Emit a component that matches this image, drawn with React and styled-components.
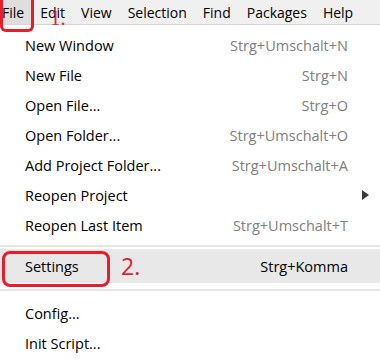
import React from "react";
import styled, { createGlobalStyle } from "styled-components";

const GlobalStyle = createGlobalStyle`
  body {
    margin: 0;
    background: #ffffff;
    font-family: "Open Sans", "Noto Sans", "Liberation Sans", sans-serif;
  }
`;

const menus = ["File", "Edit", "View", "Selection", "Find", "Packages", "Help"];

const groups = [
  [
    { label: "New Window", keys: "Strg+Umschalt+N" },
    { label: "New File", keys: "Strg+N" },
    { label: "Open File...", keys: "Strg+O" },
    { label: "Open Folder...", keys: "Strg+Umschalt+O" },
    { label: "Add Project Folder...", keys: "Strg+Umschalt+A" },
    { label: "Reopen Project", submenu: true },
    { label: "Reopen Last Item", keys: "Strg+Umschalt+T" },
  ],
  [{ label: "Settings", keys: "Strg+Komma", active: true, mark: "2." }],
  [{ label: "Config..." }, { label: "Init Script..." }],
];

const App = () => {
  return (
    <>
      <GlobalStyle />
      <Page>
        <MenuBar>
          {menus.map((m, i) => (
            <MenuTitle key={m} $open={i === 0}>
              {m}
            </MenuTitle>
          ))}
          <FileCircle />
          <StepOne>1.</StepOne>
        </MenuBar>
        <Dropdown>
          {groups.map((group, gi) => (
            <React.Fragment key={gi}>
              {gi > 0 && <Separator $before={gi === 1 ? 5 : 6} $after={gi === 1 ? 2 : 7} />}
              {group.map((item) => (
                <Row key={item.label} $active={item.active}>
                  <Label>{item.label}</Label>
                  {item.mark && (
                    <>
                      <SettingsCircle />
                      <StepTwo>{item.mark}</StepTwo>
                    </>
                  )}
                  {item.keys && <Keys $active={item.active}>{item.keys}</Keys>}
                  {item.submenu && (
                    <Arrow viewBox="0 0 7 10">
                      <path d="M0 0 L7 5 L0 10 Z" fill="#3c3c3c" />
                    </Arrow>
                  )}
                </Row>
              ))}
            </React.Fragment>
          ))}
        </Dropdown>
      </Page>
    </>
  );
};

const Page = styled.div`
  width: 380px;
  height: 360px;
  overflow: hidden;
  background: #ffffff;
`;

const MenuBar = styled.div`
  position: relative;
  display: flex;
  height: 24px;
  background: #f0f0f0;
  border-bottom: 1px solid #d4d4d4;
`;

const MenuTitle = styled.div`
  display: flex;
  align-items: center;
  padding: 0 8px;
  padding-left: ${(p) => (p.$open ? "2px" : "8px")};
  font-size: 14px;
  color: #000000;
  background: ${(p) => (p.$open ? "#dedede" : "transparent")};
`;

const FileCircle = styled.div`
  position: absolute;
  left: 0;
  top: 0;
  width: 28px;
  height: 29px;
  border: 3px solid #e61e2a;
  border-top: none;
  border-radius: 0 0 6px 6px;
`;

const StepOne = styled.span`
  position: absolute;
  left: 50px;
  top: 8px;
  font-family: "Liberation Serif", serif;
  font-size: 21px;
  line-height: 21px;
  color: #e61e2a;
`;

const Dropdown = styled.div`
  display: flex;
  flex-direction: column;
  padding-top: 5px;
`;

const Row = styled.div`
  position: relative;
  display: flex;
  align-items: center;
  height: ${(p) => (p.$active ? "34px" : "30px")};
  padding: 0 32px 0 25px;
  background: ${(p) => (p.$active ? "#e8e8e8" : "transparent")};
  font-size: 14.5px;
  color: #000000;
`;

const Label = styled.span`
  flex: 1;
  white-space: nowrap;
`;

const Keys = styled.span`
  white-space: nowrap;
  color: ${(p) => (p.$active ? "#000000" : "#808080")};
`;

const Arrow = styled.svg`
  width: 7px;
  height: 10px;
  margin-right: -21px;
`;

const SettingsCircle = styled.div`
  position: absolute;
  left: 2px;
  top: 2px;
  width: 102px;
  height: 30px;
  border: 3px solid #e61e2a;
  border-radius: 8px;
`;

const StepTwo = styled.span`
  position: absolute;
  left: 121px;
  top: 5px;
  font-size: 23px;
  line-height: 24px;
  color: #e61e2a;
`;

const Separator = styled.div`
  height: 2px;
  background: #e6e6e6;
  margin: ${(p) => `${p.$before}px 0 ${p.$after}px`};
`;

export default App;
